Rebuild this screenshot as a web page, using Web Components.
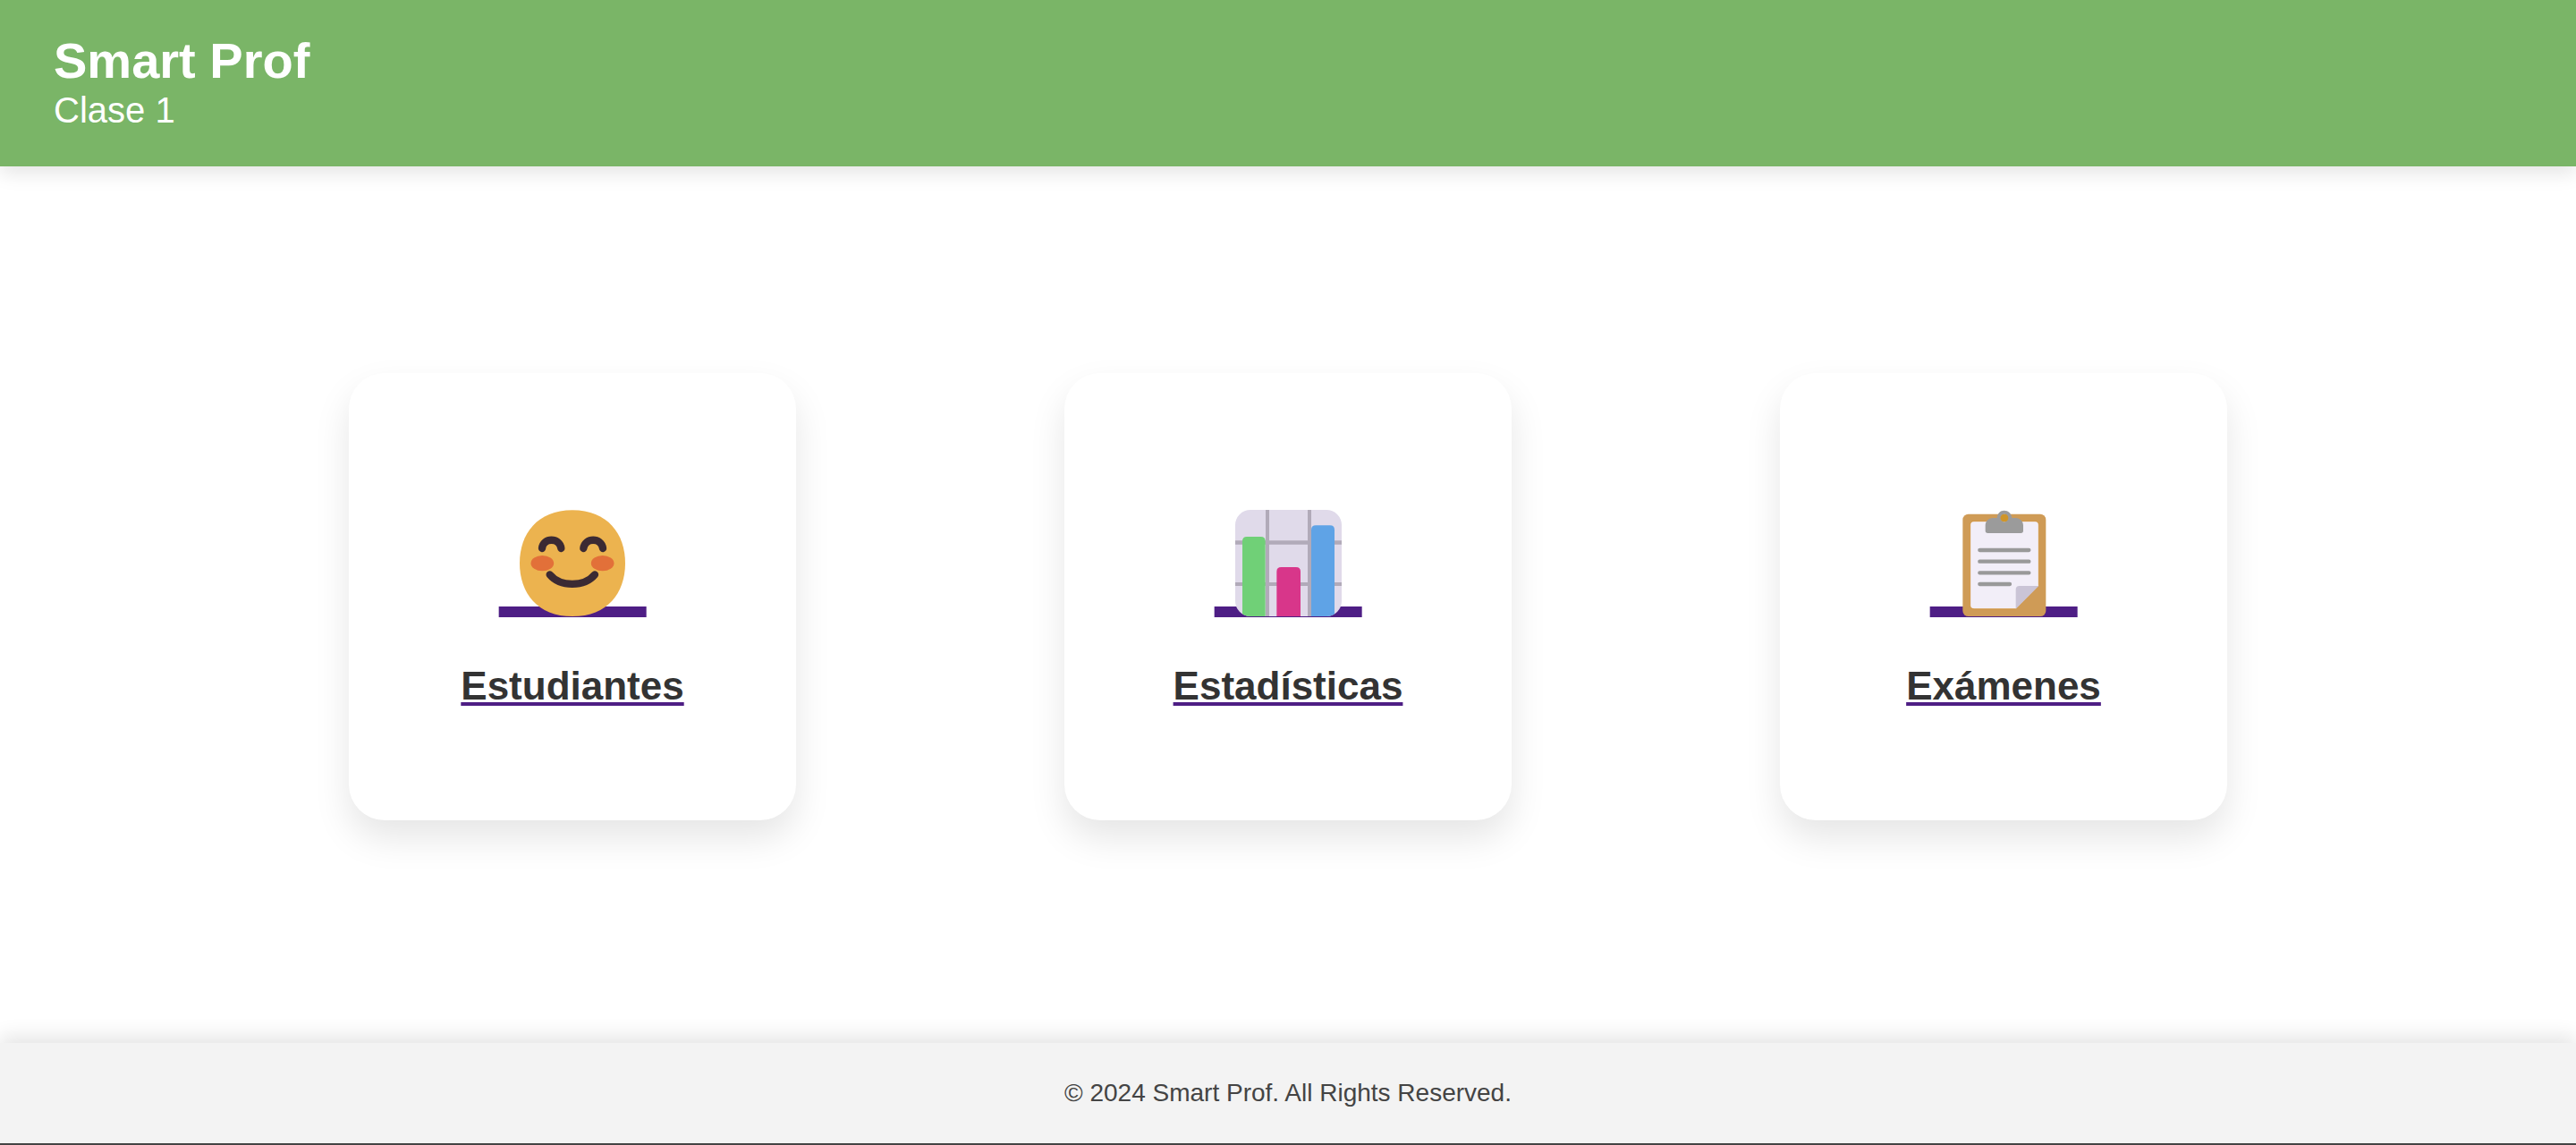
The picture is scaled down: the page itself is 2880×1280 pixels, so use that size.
<!DOCTYPE html>
<html lang="es">
<head>
<meta charset="utf-8">
<meta name="viewport" content="width=device-width, initial-scale=1">
<title>Smart Prof</title>
<style>
  html, body { margin: 0; }
  body { font-family: "Liberation Sans", Arial, sans-serif; background: #fff; }
</style>
</head>
<body>
<smart-app></smart-app>

<script>
const define = (name, html) => {
  const template = document.createElement('template');
  template.innerHTML = html;
  customElements.define(name, class extends HTMLElement {
    constructor() {
      super();
      this.attachShadow({ mode: 'open' }).append(template.content.cloneNode(true));
    }
    connectedCallback() {
      const link = this.shadowRoot.querySelector('a');
      if (link && this.hasAttribute('href')) link.href = this.getAttribute('href');
    }
  });
};

define('app-header', `
  <style>
    :host { display: block; position: relative; }
    header {
      padding: 36px 60px 40px;
      background: #7ab567;
      color: #fff;
      box-shadow: 0 8px 20px rgba(0, 0, 0, .1);
    }
    h1 { margin: 0; font-size: 56px; line-height: 64px; font-weight: 700; }
    p { margin: 0; font-size: 40px; line-height: 46px; }
  </style>
  <header>
    <h1><slot></slot></h1>
    <p><slot name="subtitle"></slot></p>
  </header>`);

define('app-footer', `
  <style>
    :host { display: block; }
    footer {
      padding: 40px;
      background: #f3f3f3;
      color: #444;
      text-align: center;
      border-bottom: 2px solid #444;
      box-shadow: 0 -8px 20px rgba(0, 0, 0, .1);
    }
    p { margin: 0; font-size: 28px; line-height: 32px; }
  </style>
  <footer><p><slot></slot></p></footer>`);

define('menu-card', `
  <style>
    :host { display: block; flex: 0 1 500px; }
    a {
      display: flex;
      flex-direction: column;
      align-items: center;
      gap: 52px;
      box-sizing: border-box;
      aspect-ratio: 1;
      padding-top: 153px;
      border-radius: 40px;
      background: #fff;
      box-shadow: 0 20px 40px rgba(0, 0, 0, .1);
      text-decoration: none;
    }
    h2 {
      margin: 0;
      font-size: 44px;
      line-height: 50px;
      color: #333;
      text-decoration: underline 4px #4e1e85;
      text-underline-offset: 3px;
    }
    .icon { display: flex; }
  </style>
  <a href="#">
    <span class="icon"><slot name="icon"></slot></span>
    <h2><slot></slot></h2>
  </a>`);

const iconStyle = `<style>:host { display: block; } svg { display: block; width: 166px; height: 120px; }</style>`;
const bar = `<path fill="#4e1e85" d="M53 384h495v36H53z"/>`;

define('icon-smile', `${iconStyle}
  <svg viewBox="51 60 498 360" aria-hidden="true">
    ${bar}
    <path fill="#ecb34f" d="M300 417C418 417 477 337 477 239C477 141 418 61 300 61C182 61 123 141 123 239C123 337 182 417 300 417Z"/>
    <ellipse cx="199" cy="239" rx="38.500" ry="26" fill="#e27039"/>
    <ellipse cx="401" cy="239" rx="38.500" ry="26" fill="#e27039"/>
    <g fill="none" stroke="#3b2a33" stroke-width="25" stroke-linecap="round">
      <path d="M198 189C202 152 257 152 262 189"/>
      <path d="M337 189C342 152 397 152 402 189"/>
      <path d="M224 277C259 319 340 319 375 277"/>
    </g>
  </svg>`);

define('icon-chart', `${iconStyle}
  <svg viewBox="51 60 498 360" aria-hidden="true">
    ${bar}
    <clipPath id="tile"><rect x="123" y="60" width="357" height="357" rx="51"/></clipPath>
    <g clip-path="url(#tile)">
      <path fill="#e0daea" d="M123 60h357v357H123z"/>
      <path fill="#b1aab9" d="M225 60h12v357h-12zM366 60h12v357h-12zM123 163h357v13H123zM123 303h357v12H123z"/>
      <path fill="#70d077" d="M147 417V165q0-15 15-15h47q15 0 15 15v252z"/>
      <path fill="#d8368a" d="M262 417V267q0-15 15-15h50q15 0 15 15v150z"/>
      <path fill="#5fa3e6" d="M378 417V127q0-15 15-15h48q15 0 15 15v290z"/>
    </g>
  </svg>`);

define('icon-clipboard', `${iconStyle}
  <svg viewBox="51 60 498 360" aria-hidden="true">
    ${bar}
    <rect x="163" y="74" width="279" height="343" rx="19" fill="#cf9b56"/>
    <path fill="#f2eef8" stroke="#cf8a1f" stroke-width="2" d="M201 98h204q13 0 13 13v203L341 392H201q-13 0-13-13V111q0-13 13-13z"/>
    <path fill="#cac4d6" d="M341 392V327q0-12 12-12h65z"/>
    <path fill="#9b9b9b" fill-rule="evenodd" d="M239 130v-18c0-14 11-25 25-25h14c1-15 11-25 24-25s25 10 26 25h13c14 0 25 11 25 25v18q0 8-8 8H247q-8 0-8-8zM302 74a13 13 0 1 0 1 0z"/>
    <circle cx="303" cy="87" r="13" fill="#cf9529"/>
    <path fill="none" stroke="#999" stroke-width="13" stroke-linecap="round" d="M220 195h165M220 233h165M220 271h165M220 309h101"/>
  </svg>`);

define('smart-app', `
  <style>
    :host { display: flex; flex-direction: column; min-height: 100vh; }
    main {
      flex: 1;
      display: flex;
      align-items: center;
      justify-content: center;
      gap: 300px;
      padding: 40px 40px 58px;
    }
  </style>
  <app-header>Smart Prof<span slot="subtitle">Clase 1</span></app-header>
  <main>
    <menu-card href="#estudiantes"><icon-smile slot="icon"></icon-smile>Estudiantes</menu-card>
    <menu-card href="#estadisticas"><icon-chart slot="icon"></icon-chart>Estadísticas</menu-card>
    <menu-card href="#examenes"><icon-clipboard slot="icon"></icon-clipboard>Exámenes</menu-card>
  </main>
  <app-footer>© 2024 Smart Prof. All Rights Reserved.</app-footer>`);
</script>
</body>
</html>
